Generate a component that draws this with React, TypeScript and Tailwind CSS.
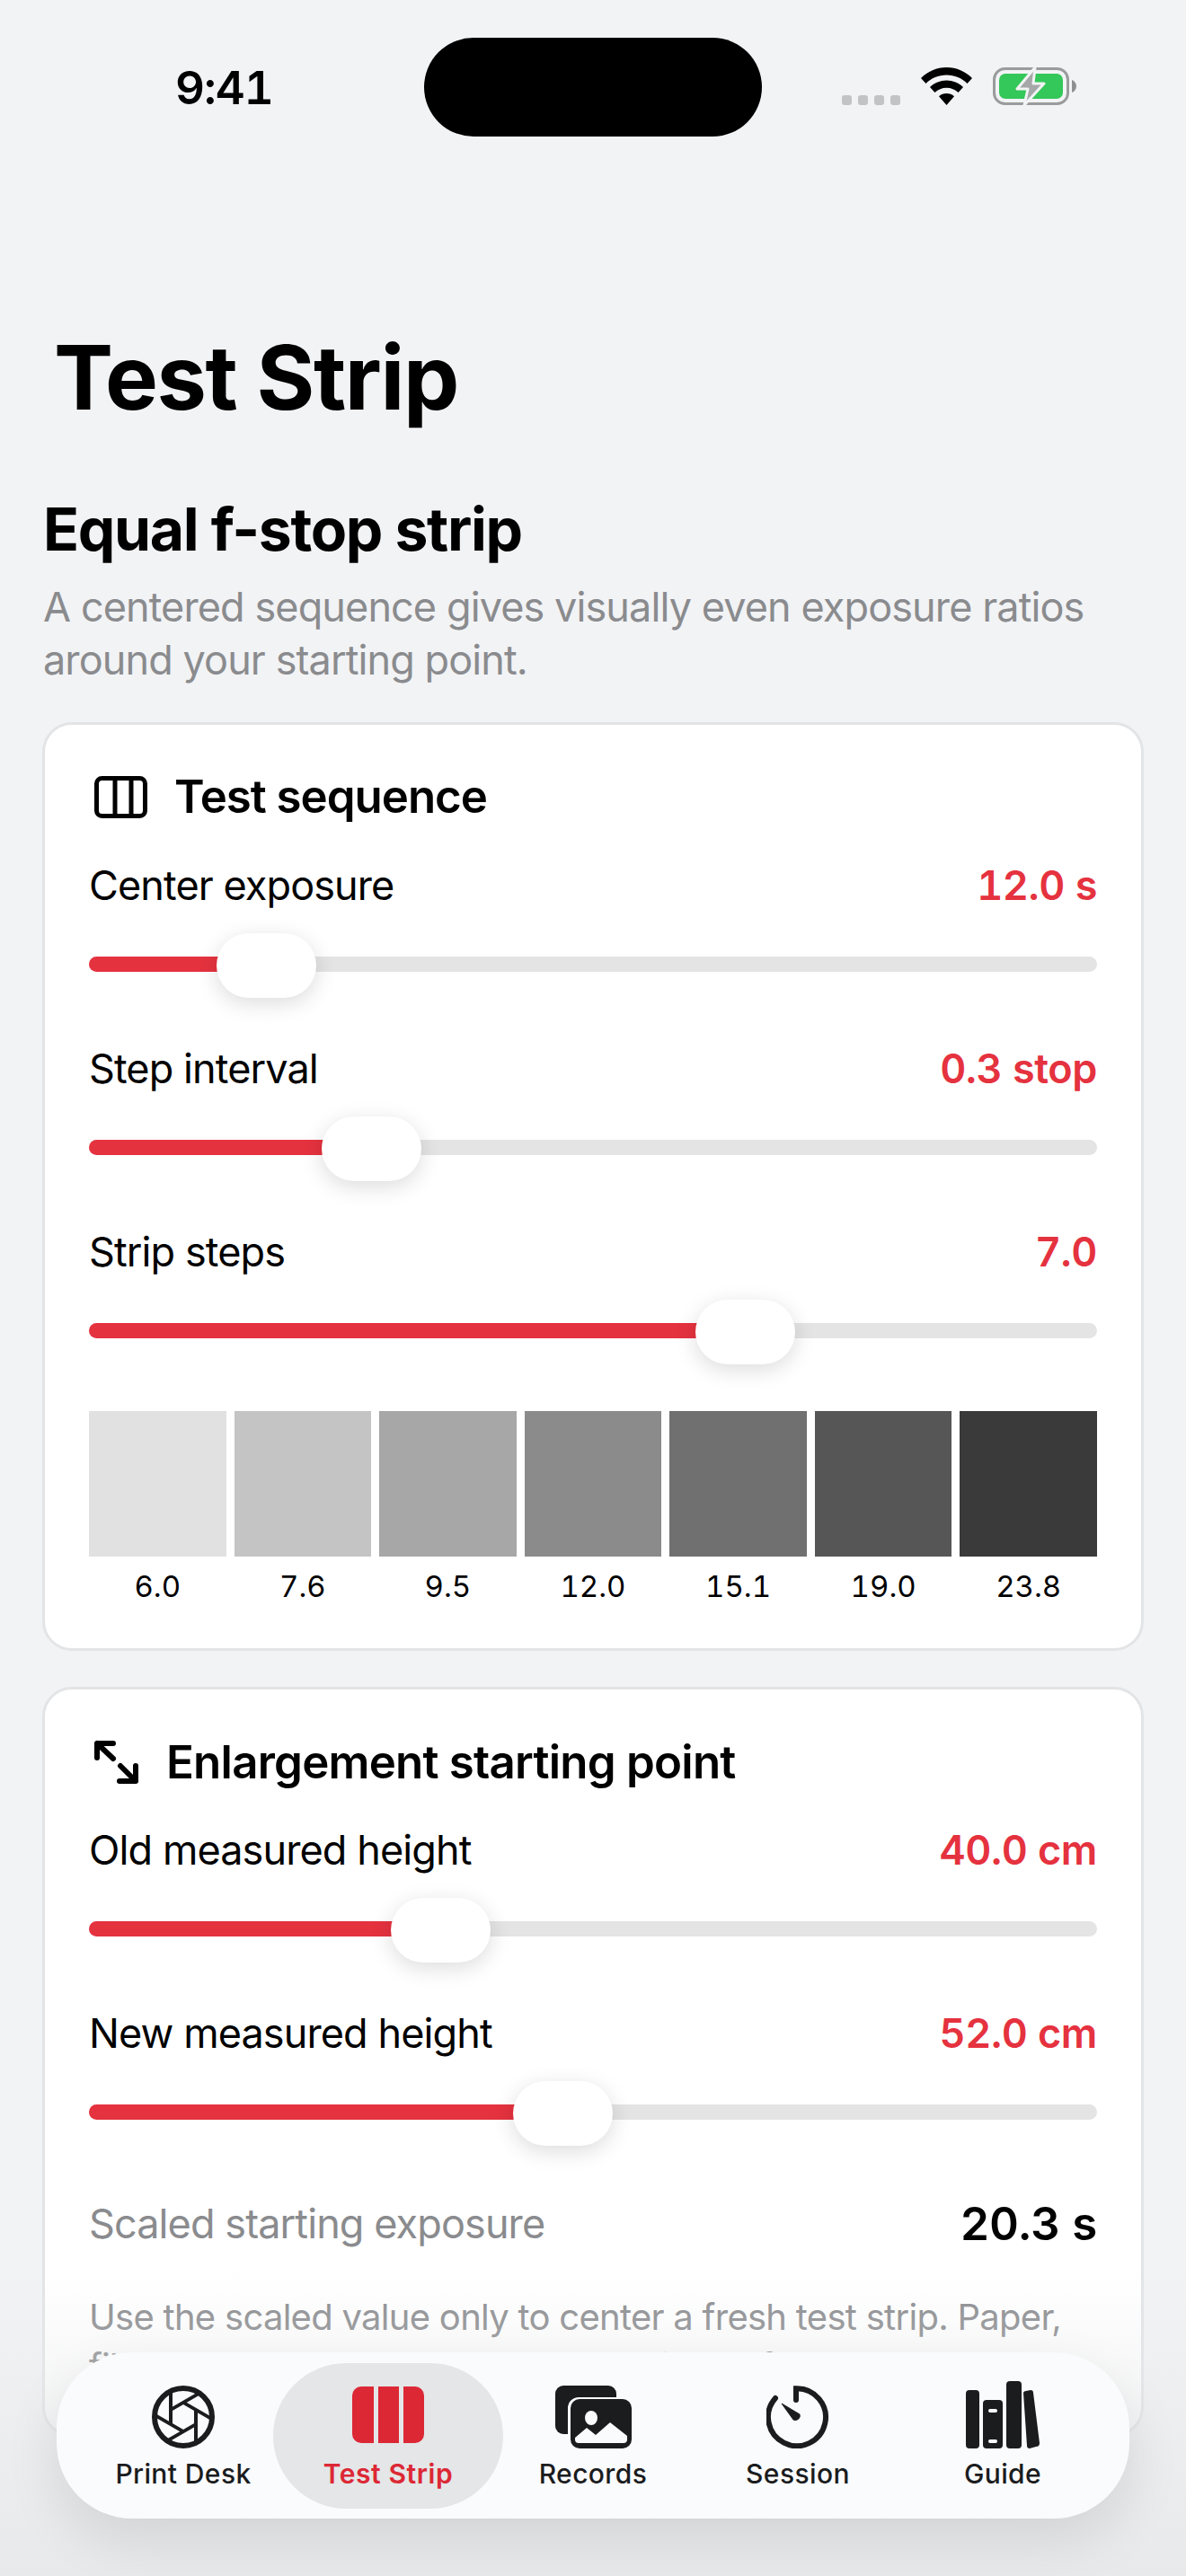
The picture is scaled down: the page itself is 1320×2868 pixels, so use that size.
const rows1 = [
  { label: "Center exposure", value: "12.0 s", pos: 197 },
  { label: "Step interval", value: "0.3 stop", pos: 314 },
  { label: "Strip steps", value: "7.0", pos: 730 },
];

const rows2 = [
  { label: "Old measured height", value: "40.0 cm", pos: 391 },
  { label: "New measured height", value: "52.0 cm", pos: 527 },
];

const swatches = [
  { color: "#e0e1e0", label: "6.0" },
  { color: "#c3c4c3", label: "7.6" },
  { color: "#a7a7a7", label: "9.5" },
  { color: "#8a8b8a", label: "12.0" },
  { color: "#6f706f", label: "15.1" },
  { color: "#555655", label: "19.0" },
  { color: "#3a3a3a", label: "23.8" },
];

const ApertureIcon = () => (
  <svg width="70" height="70" viewBox="0 0 70 70" fill="none" stroke="#1a1c1e" strokeWidth="4">
    <circle cx="35" cy="35" r="32" strokeWidth="6" />
    {[0, 60, 120, 180, 240, 300].map((deg) => (
      <line key={deg} x1="21" y1="6" x2="21" y2="43" transform={`rotate(${deg} 35 35)`} />
    ))}
  </svg>
);

const StripIcon = () => (
  <svg width="80" height="63" viewBox="0 0 80 63" fill="#dc2835">
    <path d="M24 0H10A10 10 0 0 0 0 10V53A10 10 0 0 0 10 63H24Z" />
    <rect x="29" y="0" width="23" height="63" />
    <path d="M57 0H70A10 10 0 0 1 80 10V53A10 10 0 0 1 70 63H57Z" />
  </svg>
);

const RecordsIcon = () => (
  <svg width="85" height="70" viewBox="0 0 85 70">
    <rect x="0" y="0" width="68" height="54" rx="9" fill="#1a1c1e" />
    <rect x="14" y="13" width="71" height="57" rx="12" fill="#fafbfc" />
    <rect x="17" y="15" width="68" height="55" rx="10" fill="#1a1c1e" />
    <ellipse cx="40" cy="36" rx="7" ry="8" fill="#fafbfc" />
    <path
      d="M22 58L35 47L45 55L61 41L80 56V60A4 4 0 0 1 76 64H26A4 4 0 0 1 22 60Z"
      fill="#fafbfc"
    />
  </svg>
);

const TimerIcon = () => (
  <svg width="70" height="70" viewBox="0 0 70 70" fill="none">
    <path
      d="M33 16V3.2A32 32 0 1 1 10 14"
      stroke="#1a1c1e"
      strokeWidth="6"
      strokeLinecap="round"
    />
    <path d="M17 20L37 32A5 5 0 0 1 30 38Z" fill="#1a1c1e" stroke="#1a1c1e" strokeLinejoin="round" />
  </svg>
);

const BooksIcon = () => (
  <svg width="82" height="75" viewBox="0 0 82 75" fill="#1a1c1e">
    <rect x="0" y="10" width="15" height="65" rx="4" />
    <rect x="19" y="21" width="22" height="54" rx="4" />
    <rect x="25" y="31" width="10" height="4" rx="2" fill="#fafbfc" />
    <rect x="25" y="65" width="10" height="4" rx="2" fill="#fafbfc" />
    <rect x="45" y="0" width="17" height="75" rx="4" />
    <path d="M64 13A3 3 0 0 1 67 11L72 10A3 3 0 0 1 75 13L82 69A4 4 0 0 1 78 73L71 75A3 3 0 0 1 68 72Z" />
  </svg>
);

const tabs = [
  { label: "Print Desk", icon: <ApertureIcon /> },
  { label: "Test Strip", icon: <StripIcon />, active: true },
  { label: "Records", icon: <RecordsIcon /> },
  { label: "Session", icon: <TimerIcon /> },
  { label: "Guide", icon: <BooksIcon /> },
];

const StatusBar = () => (
  <div className="flex h-[152px] items-start pl-[195px] pt-[42px]">
    <div className="mt-[28px] w-[277px] text-[51px] leading-[56px] font-semibold tracking-[-1px] tabular-nums text-black">
      9:41
    </div>
    <div className="h-[110px] w-[376px] rounded-[55px] bg-black" />
    <div className="ml-[89px] mt-[33px] flex items-end">
      <div className="flex gap-[7px]">
        {[0, 1, 2, 3].map((i) => (
          <div key={i} className="h-[11px] w-[11px] rounded-[3px] bg-[#c2c3c5]" />
        ))}
      </div>
      <svg className="ml-[23px]" width="57" height="42" viewBox="0 0 57 42" fill="#000">
        <path d="M28.5 0C39.5 0 49.5 4.5 57 12L51.500 18C45.500 12 37.500 8.500 28.500 8.500C19.500 8.500 11.500 12 5.500 18L0 12C7.500 4.500 17.500 0 28.500 0Z" />
        <path d="M28.500 14.500C35.500 14.500 42 17.300 47 22L41.500 28C38 24.800 33.500 22.800 28.500 22.800C23.500 22.800 19 24.800 15.500 28L10 22C15 17.300 21.500 14.500 28.500 14.500Z" />
        <path d="M28.500 29C31.700 29 34.700 30.200 37 32.200L28.500 42L20 32.200C22.300 30.200 25.300 29 28.500 29Z" />
      </svg>
      <svg className="ml-[23px]" width="93" height="42" viewBox="0 0 93 42">
        <rect x="1.500" y="1.500" width="82" height="39" rx="12" fill="none" stroke="#9a9b9c" strokeWidth="3" />
        <rect x="7" y="7" width="71" height="28" rx="7" fill="#34c759" />
        <path d="M88 14C91 15 93 18 93 21C93 24 91 27 88 28Z" fill="#8e8f90" />
        <path
          d="M47 0L27 24H39L35 42L57 18H45Z"
          fill="#a6a7a9"
          stroke="#f2f3f5"
          strokeWidth="3"
          strokeLinejoin="round"
        />
      </svg>
    </div>
  </div>
);

const SliderRow = ({ label, value, pos }: { label: string; value: string; pos: number }) => (
  <div>
    <div className="flex items-center justify-between">
      <span className="text-[45px] leading-[60px] tracking-[-0.02em] text-black">{label}</span>
      <span className="text-[45px] leading-[60px] font-semibold tracking-[-0.4px] tabular-nums text-[#e5323f]">{value}</span>
    </div>
    <div className="relative mt-[21px] flex h-[72px] items-center">
      <div className="h-[17px] w-full overflow-hidden rounded-full bg-[#e3e4e3]">
        <div className="h-full bg-[#e5323f]" style={{ width: pos + 20 }} />
      </div>
      <div
        className="absolute top-[2px] h-[72px] w-[111px] rounded-[36px] bg-white shadow-[0_6px_24px_rgba(0,0,0,0.14)]"
        style={{ left: pos - 55 }}
      />
    </div>
  </div>
);

const Card = ({ children }: { children: React.ReactNode }) => (
  <div className="rounded-[33px] border-[3px] border-[#e3e4e5] bg-white px-[49px]">{children}</div>
);

const App = () => {
  return (
    <div className="relative h-[2868px] w-[1320px] overflow-hidden bg-[#f2f3f5] font-[family-name:Inter,sans-serif] text-black">
      <StatusBar />

      <h1 className="mt-[208px] pl-[60px] text-[99px] leading-[120px] font-bold tracking-[-0.014em]">Test Strip</h1>

      <main className="px-[47px]">
        <h2 className="mt-[69px] pl-[1px] text-[66px] leading-[80px] font-bold tracking-[-0.02em]">Equal f-stop strip</h2>
        <p className="mt-[17px] pl-[1px] text-[45px] leading-[59px] tracking-[-0.02em] text-[#8a8b8e]">
          A centered sequence gives visually even exposure ratios around your starting point.
        </p>

        <div className="mt-[40px]">
          <Card>
            <div className="flex items-center gap-[30px] pl-[6px] pt-[47px]">
              <svg width="59" height="47" viewBox="0 0 59 47" fill="none" stroke="#000" strokeWidth="5">
                <rect x="2.500" y="2.500" width="54" height="42" rx="6" />
                <path d="M23 3V44M41 3V44" />
              </svg>
              <h3 className="text-[51px] leading-[66px] font-semibold tracking-[-0.02em]">Test sequence</h3>
            </div>
            <div className="mt-[36px] flex flex-col gap-[51px]">
              {rows1.map((r) => (
                <SliderRow key={r.label} {...r} />
              ))}
            </div>
            <div className="mt-[54px] grid grid-cols-7 gap-[9px] pb-[49px]">
              {swatches.map((s) => (
                <div key={s.label}>
                  <div className="h-[162px]" style={{ backgroundColor: s.color }} />
                  <div className="mt-[13px] text-center text-[33px] leading-[40px] tabular-nums text-black">{s.label}</div>
                </div>
              ))}
            </div>
          </Card>
        </div>

        <div className="mt-[40px]">
          <Card>
            <div className="flex items-center gap-[30px] pl-[5px] pt-[48px]">
              <svg width="51" height="51" viewBox="0 0 51 51" fill="none" stroke="#000" strokeWidth="6" strokeLinecap="round" strokeLinejoin="round">
                <path d="M22 4H4V20M4 4L22 21M29 46H47V29M47 46L30 29" />
              </svg>
              <h3 className="text-[51px] leading-[66px] font-semibold tracking-[-0.015em]">Enlargement starting point</h3>
            </div>
            <div className="mt-[35px] flex flex-col gap-[51px]">
              {rows2.map((r) => (
                <SliderRow key={r.label} {...r} />
              ))}
            </div>
            <div className="mt-[59px] flex items-center justify-between">
              <span className="text-[45px] leading-[60px] tracking-[-0.02em] text-[#8a8b8e]">Scaled starting exposure</span>
              <span className="text-[51px] leading-[60px] font-semibold tracking-[-0.3px] tabular-nums">20.3 s</span>
            </div>
            <p className="mt-[46px] pb-[48px] text-[40px] leading-[55px] tracking-[-0.018em] text-[#8a8b8e]">
              Use the scaled value only to center a fresh test strip. Paper, filter, lens, and enlarger changes still call for a new test.
            </p>
          </Card>
        </div>
      </main>

      <div className="absolute inset-x-0 bottom-0 h-[340px] bg-gradient-to-b from-[#f2f3f500] to-[#e8e9eb]" />

      <nav className="absolute bottom-[64px] left-[63px] grid h-[185px] w-[1194px] grid-cols-5 items-center rounded-[84px] bg-[#fafbfc] px-[27px] shadow-[0_24px_60px_rgba(0,0,0,0.1)]">
        {tabs.map((t) =>
          t.active ? (
            <div
              key={t.label}
              className="-mx-[14px] flex h-[162px] flex-col items-center justify-end rounded-[81px] bg-[#e4e6e7] pb-[21px]"
            >
              <div className="flex h-[75px] items-end pb-[6px]">{t.icon}</div>
              <span className="mt-[10px] text-[30px] leading-[36px] font-semibold tracking-[0.6px] text-[#dc2835]">{t.label}</span>
            </div>
          ) : (
            <div key={t.label} className="flex h-[162px] flex-col items-center justify-end pb-[21px]">
              <div className="flex h-[75px] items-end">{t.icon}</div>
              <span className="mt-[10px] text-[30px] leading-[36px] font-medium tracking-[0.4px] text-[#1a1c1e]">{t.label}</span>
            </div>
          ),
        )}
      </nav>
    </div>
  );
};

export default App;
